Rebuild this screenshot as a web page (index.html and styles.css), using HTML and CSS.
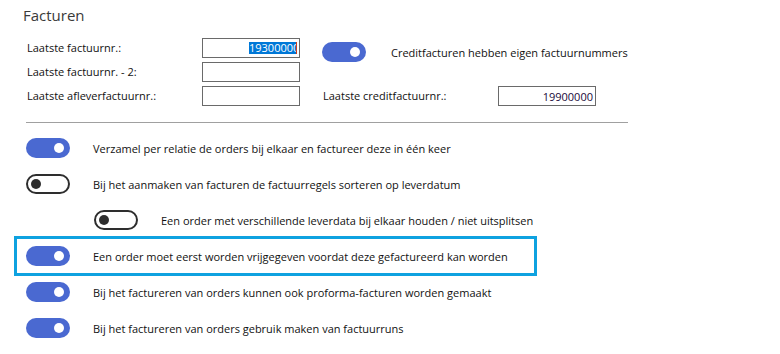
FILE: index.html
```html
<!DOCTYPE html>
<html lang="nl">
<head>
<meta charset="utf-8">
<title>Facturen</title>
<link rel="stylesheet" href="styles.css">
</head>
<body>
<div class="page">
  <h1 class="title">Facturen</h1>
  <div class="numbers">
    <span class="label r1">Laatste factuurnr.:</span>
    <div class="field r1"><span class="sel">19300000</span><span class="caret"></span></div>
    <div class="credit-toggle"><span class="toggle on"></span><span class="ctext">Creditfacturen hebben eigen factuurnummers</span></div>
    <span class="label r2">Laatste factuurnr. - 2:</span>
    <div class="field r2"></div>
    <span class="label r3">Laatste afleverfactuurnr.:</span>
    <div class="field r3"></div>
    <span class="label r3 c4">Laatste creditfactuurnr.:</span>
    <div class="field r3 c5"><span class="val">19900000</span></div>
  </div>
  <div class="sep"></div>
  <div class="options">
    <div class="opt"><span class="toggle on"></span><span class="otext">Verzamel per relatie de orders bij elkaar en factureer deze in één keer</span></div>
    <div class="opt"><span class="toggle off"></span><span class="otext">Bij het aanmaken van facturen de factuurregels sorteren op leverdatum</span></div>
    <div class="opt indent"><span class="toggle off"></span><span class="otext">Een order met verschillende leverdata bij elkaar houden / niet uitsplitsen</span></div>
    <div class="opt focus"><span class="toggle on"></span><span class="otext">Een order moet eerst worden vrijgegeven voordat deze gefactureerd kan worden</span></div>
    <div class="opt"><span class="toggle on"></span><span class="otext">Bij het factureren van orders kunnen ook proforma-facturen worden gemaakt</span></div>
    <div class="opt"><span class="toggle on"></span><span class="otext">Bij het factureren van orders gebruik maken van factuurruns</span></div>
  </div>
</div>
</body>
</html>
```
FILE: styles.css
```css
html, body {
  margin: 0;
  padding: 0;
  background: #ffffff;
}
body {
  font-family: "Open Sans", "Noto Sans", "Liberation Sans", sans-serif;
  font-size: 11px;
  color: #111111;
}
.page {
  padding-top: 5px;
}
.title {
  margin: 0 0 0 23px;
  font-size: 15px;
  line-height: 20px;
  font-weight: 400;
  color: #3a3a3a;
}
.numbers {
  margin: 13px 0 0 27px;
  display: grid;
  grid-template-columns: 175px 98px 23px 175px 98px;
  grid-template-rows: 20px 20px 20px;
  row-gap: 4px;
}
.label {
  grid-column: 1;
  line-height: 20px;
  white-space: nowrap;
}
.r1 { grid-row: 1; }
.r2 { grid-row: 2; }
.r3 { grid-row: 3; }
.label.c4 { grid-column: 4; }
.field {
  grid-column: 2;
  box-sizing: border-box;
  height: 20px;
  border: 1px solid #6a6a6a;
  background: #fff;
  display: flex;
  justify-content: flex-end;
  align-items: center;
  padding-right: 2px;
  overflow: hidden;
}
.field.c5 { grid-column: 5; }
.sel {
  display: inline-block;
  width: 47px;
  height: 12px;
  line-height: 12px;
  overflow: hidden;
  white-space: nowrap;
  background: #0078d7;
  color: #ffffff;
}
.caret {
  display: inline-block;
  width: 1px;
  height: 12px;
  background: #d04020;
}
.val {
  color: #1a0a3a;
}
.credit-toggle {
  grid-column: 4 / span 3;
  grid-row: 1;
  align-self: start;
  margin-top: 4px;
  margin-left: -1px;
  display: flex;
  align-items: center;
  gap: 25px;
  white-space: nowrap;
}
.toggle {
  flex: none;
  box-sizing: border-box;
  width: 44px;
  height: 20px;
  border-radius: 10px;
  display: flex;
  align-items: center;
}
.toggle::after {
  content: "";
  width: 10px;
  height: 10px;
  border-radius: 50%;
}
.toggle.on {
  background: #4a69d1;
  justify-content: flex-end;
  padding-right: 6px;
}
.toggle.on::after {
  background: #ffffff;
}
.toggle.off {
  border: 2px solid #2e2e2e;
  padding-left: 3px;
}
.toggle.off::after {
  background: #2e2e2e;
}
.sep {
  margin: 16px 0 0 26px;
  width: 602px;
  height: 1px;
  background: #a0a0a0;
}
.options {
  margin-top: 7px;
  display: flex;
  flex-direction: column;
  align-items: flex-start;
}
.opt {
  height: 36px;
  margin-left: 16px;
  padding-left: 10px;
  display: flex;
  align-items: center;
  gap: 23px;
  white-space: nowrap;
}
.opt.indent {
  padding-left: 78px;
}
.opt.focus {
  box-sizing: border-box;
  width: 519px;
  outline: 3px solid #0ea2e0;
  outline-offset: -1px;
}
```
